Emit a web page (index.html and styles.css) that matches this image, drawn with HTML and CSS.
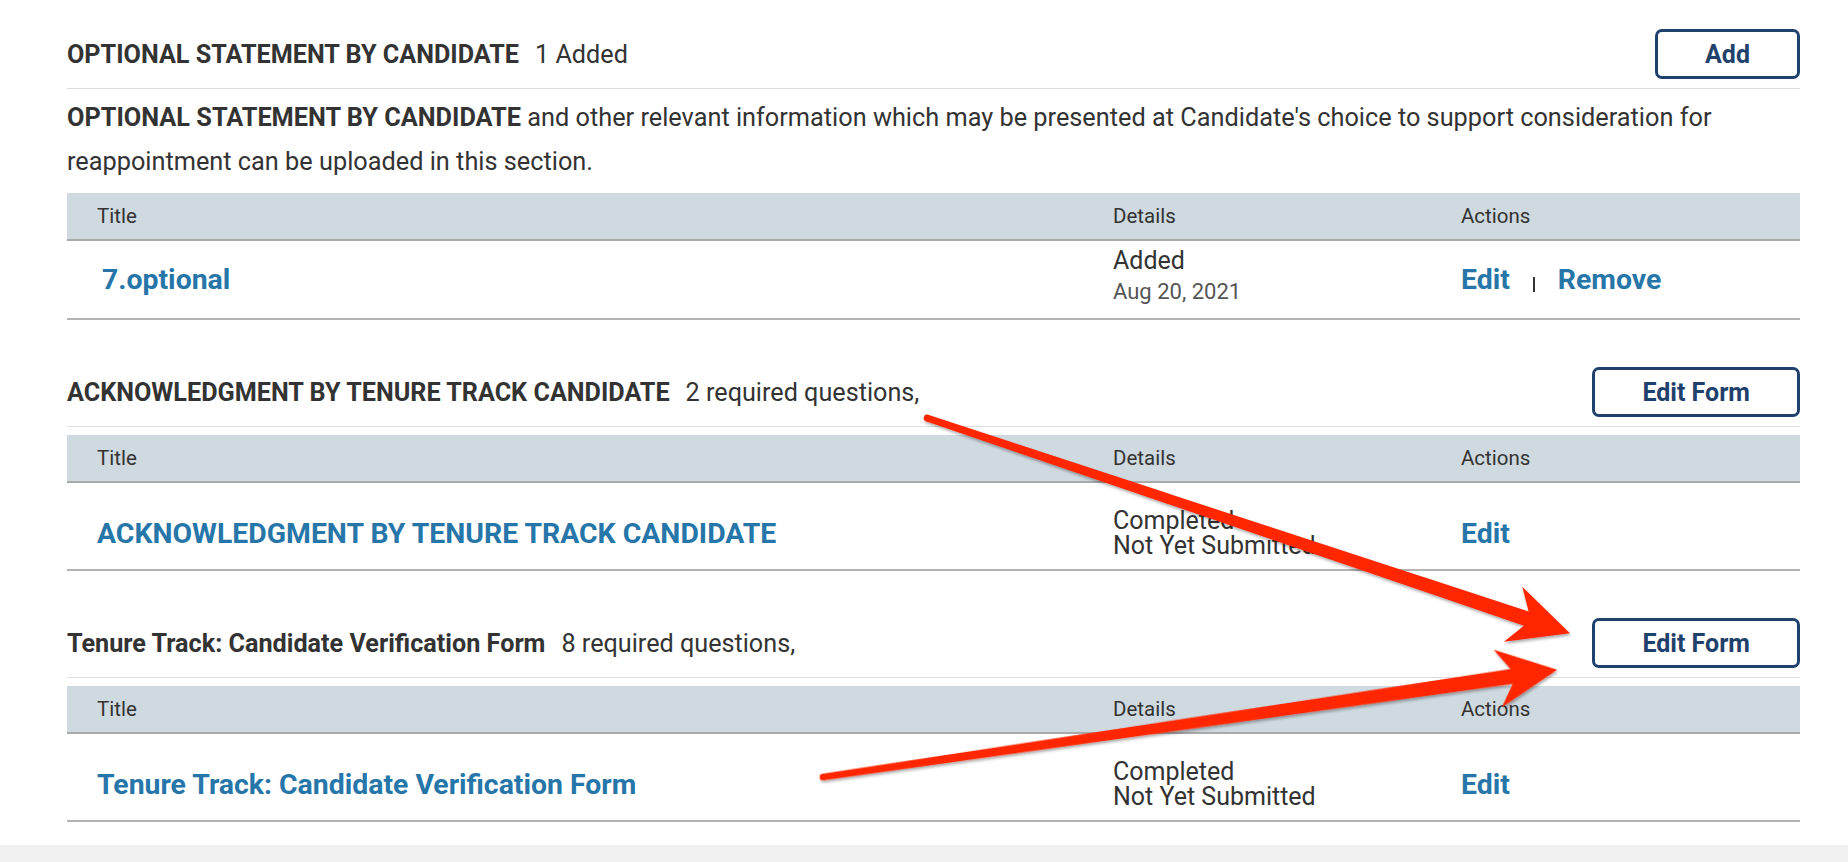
FILE: index.html
```html
<!DOCTYPE html>
<html lang="en">
<head>
  <meta charset="UTF-8">
  <meta name="viewport" content="width=device-width, initial-scale=1.0">
  <title>Candidate Packet</title>
  <link rel="stylesheet" href="styles.css">
</head>
<body>

<div class="panel">

  <section class="block">
    <div class="block-head">
      <h2 class="block-title">OPTIONAL STATEMENT BY CANDIDATE<span class="block-count">1 Added</span></h2>
      <button class="outline-btn">Add</button>
    </div>
    <p class="block-desc"><b>OPTIONAL STATEMENT BY CANDIDATE</b> and other relevant information which may be presented at Candidate's choice to support consideration for reappointment can be uploaded in this section.</p>
    <div class="grid">
      <div class="grid-head">
        <div>Title</div>
        <div>Details</div>
        <div>Actions</div>
      </div>
      <div class="grid-row short">
        <div><a class="item-link indent" href="#">7.optional</a></div>
        <div class="status lifted">
          <div>Added</div>
          <div class="status-date">Aug 20, 2021</div>
        </div>
        <div class="actions">
          <a class="item-link" href="#">Edit</a>
          <span class="pipe"></span>
          <a class="item-link" href="#">Remove</a>
        </div>
      </div>
    </div>
  </section>

  <section class="block">
    <div class="block-head">
      <h2 class="block-title">ACKNOWLEDGMENT BY TENURE TRACK CANDIDATE<span class="block-count">2 required questions,</span></h2>
      <button class="outline-btn">Edit Form</button>
    </div>
    <div class="grid">
      <div class="grid-head">
        <div>Title</div>
        <div>Details</div>
        <div>Actions</div>
      </div>
      <div class="grid-row">
        <div><a class="item-link" href="#">ACKNOWLEDGMENT BY TENURE TRACK CANDIDATE</a></div>
        <div class="status">
          <div>Completed</div>
          <div>Not Yet Submitted</div>
        </div>
        <div class="actions">
          <a class="item-link" href="#">Edit</a>
        </div>
      </div>
    </div>
  </section>

  <section class="block">
    <div class="block-head">
      <h2 class="block-title">Tenure Track: Candidate Verification Form<span class="block-count">8 required questions,</span></h2>
      <button class="outline-btn">Edit Form</button>
    </div>
    <div class="grid">
      <div class="grid-head">
        <div>Title</div>
        <div>Details</div>
        <div>Actions</div>
      </div>
      <div class="grid-row">
        <div><a class="item-link" href="#">Tenure Track: Candidate Verification Form</a></div>
        <div class="status">
          <div>Completed</div>
          <div>Not Yet Submitted</div>
        </div>
        <div class="actions">
          <a class="item-link" href="#">Edit</a>
        </div>
      </div>
    </div>
  </section>

</div>

<!-- annotation arrows drawn over the screenshot -->
<svg class="marks" width="1848" height="862" viewBox="0 0 1848 862">
  <defs>
    <filter id="shade" x="-5%" y="-20%" width="110%" height="140%">
      <feDropShadow dx="1" dy="2" stdDeviation="1.5" flood-color="#000" flood-opacity="0.35"/>
    </filter>
  </defs>
  <g fill="#ff2600" filter="url(#shade)">
    <g transform="translate(927 418) rotate(18.51)">
      <circle r="3.3"/>
      <polygon points="0,-3.3 632,-7.5 618,-29 678,0 618,29 632,7.5 0,3.3"/>
    </g>
    <g transform="translate(823 777) rotate(-8.31)">
      <circle r="3.3"/>
      <polygon points="0,-3.3 696,-7.5 682,-29 742,0 682,29 696,7.5 0,3.3"/>
    </g>
  </g>
</svg>

</body>
</html>
```

FILE: styles.css
```css
body {
  margin: 0;
  background-color: #f1f1f1;
  color: #333;
  font-family: Roboto, 'Liberation Sans', sans-serif;
}

.panel {
  background-color: #fff;
  padding: 29px 48px 23px 67px;
  box-shadow: 0 3px 10px rgba(0, 0, 0, 0.16);
}

.block + .block {
  margin-top: 47px;
}

.block-head {
  display: flex;
  justify-content: space-between;
  align-items: center;
  padding-bottom: 9px;
  border-bottom: 1px solid #dcdcdc;
}

.block-title {
  margin: 0;
  font-size: 25.2px;
  font-weight: 700;
}

.block-count {
  font-weight: 400;
  margin-left: 16px;
}

.outline-btn {
  box-sizing: border-box;
  height: 50px;
  padding: 0 47px;
  background-color: #fff;
  border: 3px solid #1f416c;
  border-radius: 7px;
  color: #1f416c;
  font-family: Roboto, 'Liberation Sans', sans-serif;
  font-size: 25px;
  font-weight: 700;
  cursor: pointer;
}

.block-desc {
  margin: 7px 0 9px;
  font-size: 25.3px;
  line-height: 44px;
}

.grid {
  margin-top: 8px;
}

.grid-head,
.grid-row {
  display: grid;
  grid-template-columns: 1016px 348px 1fr;
  align-items: center;
}

.grid-head > div,
.grid-row > div {
  padding-left: 30px;
}

.grid-head {
  height: 46px;
  background-color: #cfd9e0;
  border-bottom: 2px solid #aaa;
  font-size: 20.5px;
}

.grid-row {
  box-sizing: border-box;
  height: 88px;
  padding-top: 14px;
  border-bottom: 2px solid #b3b3b3;
}

.grid-row.short {
  height: 79px;
  padding-top: 0;
}

.item-link {
  color: #2676a9;
  font-size: 28.4px;
  font-weight: 700;
  text-decoration: none;
}

.item-link.indent {
  padding-left: 5px;
}

.status {
  font-size: 25px;
  line-height: 25px;
}

.status.lifted {
  line-height: 26px;
  padding-bottom: 7px;
}

.status-date {
  margin-top: 5px;
  color: #555;
  font-size: 22px;
}

.actions {
  display: flex;
  align-items: center;
  gap: 23px;
}

.pipe {
  width: 2px;
  height: 15px;
  margin-top: 10px;
  background-color: #333;
}

.marks {
  position: absolute;
  top: 0;
  left: 0;
  pointer-events: none;
}
```
